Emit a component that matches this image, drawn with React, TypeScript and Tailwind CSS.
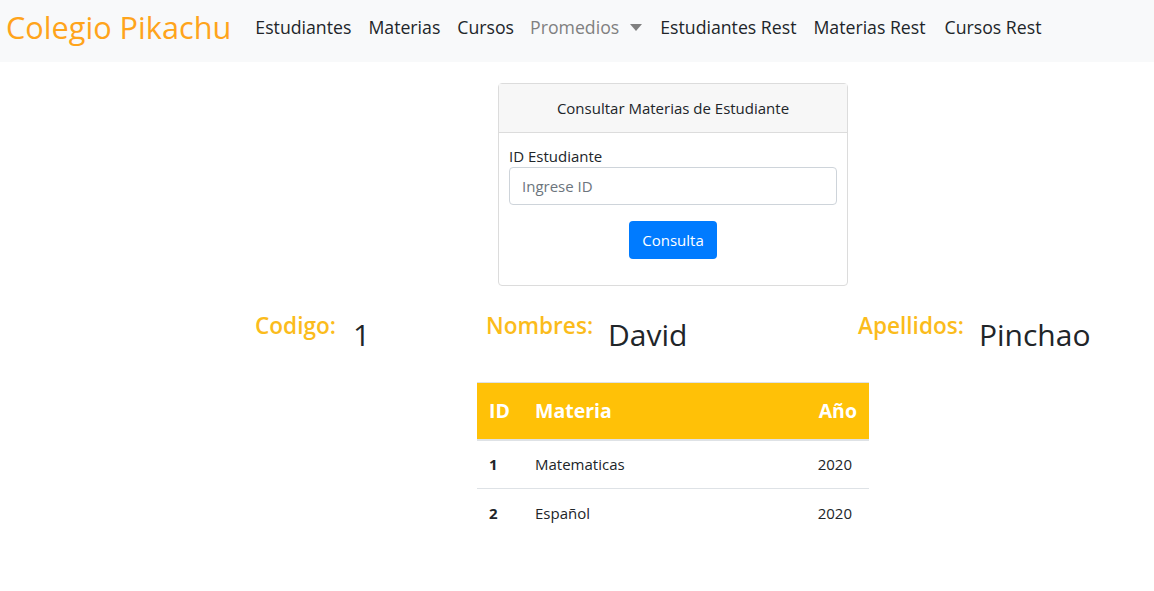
import React from "react";

const font = { fontFamily: '"Open Sans", "Noto Sans", sans-serif' };

export default function App() {
  return (
    <div className="min-h-[591px] w-full bg-white text-[#212529]" style={font}>
      <nav className="flex h-[62px] items-center bg-[#f8f9fa] pb-[7px] pl-[6px]">
        <span className="mr-[24px] text-[30.7px] leading-none text-[#ffa41b]">Colegio Pikachu</span>
        <div className="flex items-center text-[17.7px] text-[#212529]">
          <span className="mr-[17px]">Estudiantes</span>
          <span className="mr-[17px]">Materias</span>
          <span className="mr-[16px]">Cursos</span>
          <span className="mr-[18px] flex items-center text-[#808080]">
            Promedios
            <span className="ml-[11px] inline-block h-0 w-0 border-x-[6px] border-t-[7px] border-x-transparent border-t-[#808080]" />
          </span>
          <span className="mr-[17px]">Estudiantes Rest</span>
          <span className="mr-[19px]">Materias Rest</span>
          <span>Cursos Rest</span>
        </div>
      </nav>

      <div className="mt-[21px] flex pl-[498px]">
        <div className="w-[350px] rounded-[4px] border border-[#dcdcdc] bg-white">
          <div className="flex h-[49px] items-center justify-center border-b border-[#dcdcdc] bg-[#f7f7f7] text-[15px]">
            Consultar Materias de Estudiante
          </div>
          <div className="px-[10px] pb-[26px] pt-[12px]">
            <div className="text-[15px] leading-[22px]">ID Estudiante</div>
            <div className="flex h-[38px] items-center rounded-[4px] border border-[#ced4da] px-[12px] text-[15px] text-[#6c757d]">
              Ingrese ID
            </div>
            <div className="mt-[16px] flex justify-center">
              <div className="flex h-[38px] w-[88px] items-center justify-center rounded-[4px] bg-[#007bff] text-[15px] text-white">
                Consulta
              </div>
            </div>
          </div>
        </div>
      </div>

      <div className="mt-[26px] grid grid-cols-[231px_372px_auto] pl-[255px]">
        <div className="flex items-start">
          <span className="text-[22.6px] font-semibold leading-[28px] text-[#fbbc1c]">Codigo:</span>
          <span className="ml-[17px] mt-[3px] text-[30px] leading-[40px]">1</span>
        </div>
        <div className="flex items-start">
          <span className="text-[22.6px] font-semibold leading-[28px] text-[#fbbc1c]">Nombres:</span>
          <span className="ml-[15px] mt-[3px] text-[30px] leading-[40px]">David</span>
        </div>
        <div className="flex items-start">
          <span className="text-[22.6px] font-semibold leading-[28px] text-[#fbbc1c]">Apellidos:</span>
          <span className="ml-[15px] mt-[3px] text-[30px] leading-[40px]">Pinchao</span>
        </div>
      </div>

      <div className="mt-[27px] flex pl-[477px]">
        <table className="w-[392px] border-collapse">
          <thead>
            <tr className="h-[57px] border-t border-b-2 border-t-[#dee2e6] border-b-[#dee2e6] bg-[#ffc107] text-[19.5px] font-bold text-white">
              <th className="w-[58px] pl-[12px] text-left">ID</th>
              <th className="text-left">Materia</th>
              <th className="pr-[12px] text-right">Año</th>
            </tr>
          </thead>
          <tbody className="text-[15px]">
            <tr className="h-[49px] border-b border-[#dee2e6]">
              <td className="pl-[12px] font-bold">1</td>
              <td>Matematicas</td>
              <td className="pr-[17px] text-right">2020</td>
            </tr>
            <tr className="h-[49px]">
              <td className="pl-[12px] font-bold">2</td>
              <td>Español</td>
              <td className="pr-[17px] text-right">2020</td>
            </tr>
          </tbody>
        </table>
      </div>
    </div>
  );
}
